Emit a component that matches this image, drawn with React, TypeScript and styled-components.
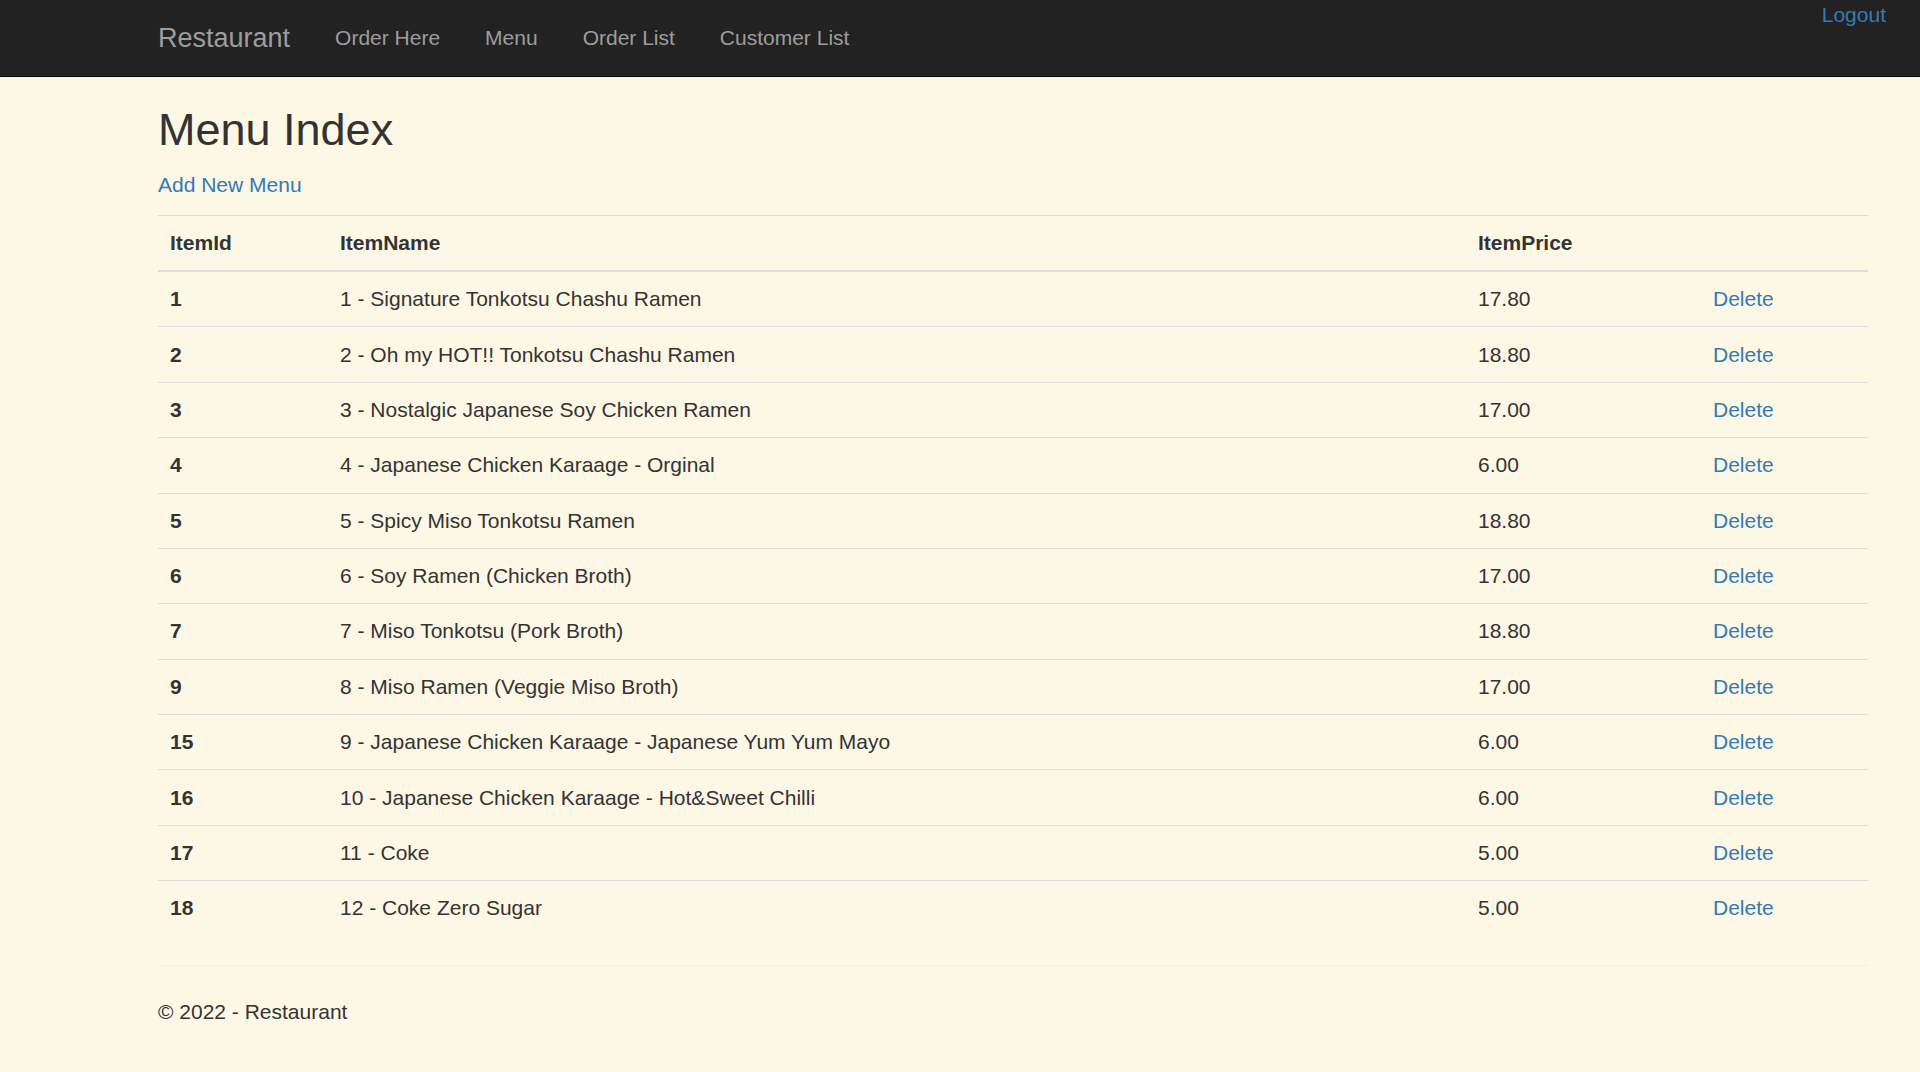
import React from "react";
import styled, { createGlobalStyle } from "styled-components";

const GlobalStyle = createGlobalStyle`
  html, body {
    margin: 0;
    padding: 0;
    background: #fdf8e5;
  }
  body {
    font-family: "Liberation Sans", Arial, Helvetica, sans-serif;
    font-size: 21px;
    line-height: 30px;
    color: #333333;
    overflow: hidden;
  }
  * { box-sizing: border-box; }
`;

const NavBar = styled.header`
  height: 77px;
  background: #222222;
  border-bottom: 1px solid #080808;
  display: flex;
  align-items: flex-start;
  padding: 0 34px 0 158px;
`;

const Brand = styled.a`
  font-size: 27px;
  line-height: 30px;
  padding: 22.5px 22.5px 22.5px 0;
  color: #9d9d9d;
  text-decoration: none;
`;

const NavList = styled.nav`
  display: flex;
`;

const NavLink = styled.a`
  font-size: 21px;
  line-height: 30px;
  padding: 22.5px;
  color: #9d9d9d;
  text-decoration: none;
`;

const Logout = styled.a`
  margin-left: auto;
  font-size: 21px;
  line-height: 30px;
  color: #337ab7;
  text-decoration: none;
`;

const Main = styled.main`
  width: 1710px;
  margin-left: 158px;
  padding-top: 28px;
`;

const Title = styled.h2`
  font-size: 45px;
  line-height: 49.5px;
  font-weight: 500;
  margin: 0 0 15px;
`;

const Para = styled.p`
  margin: 0 0 15px;
`;

const Link = styled.a`
  color: #337ab7;
  text-decoration: none;
`;

const Table = styled.table`
  width: 1710px;
  table-layout: fixed;
  border-collapse: collapse;
  margin-bottom: 29.5px;
`;

const HeadCell = styled.th`
  text-align: left;
  font-weight: 700;
  padding: 12.25px 12px;
  line-height: 30px;
  border-top: 1px solid #dddddd;
  border-bottom: 2px solid #dddddd;
`;

const Cell = styled.td<{ $bold?: boolean }>`
  padding: 12.2px 12px;
  line-height: 30px;
  border-top: 1px solid #dddddd;
  font-weight: ${(p) => (p.$bold ? 700 : 400)};
  white-space: nowrap;
`;

const Rule = styled.hr`
  border: 0;
  border-top: 1px solid #eeeeee;
  margin: 0 0 31px;
`;

const Footer = styled.footer`
  p { margin: 0 0 15px; }
`;

const rows: [string, string, string][] = [
  ["1", "1 - Signature Tonkotsu Chashu Ramen", "17.80"],
  ["2", "2 - Oh my HOT!! Tonkotsu Chashu Ramen", "18.80"],
  ["3", "3 - Nostalgic Japanese Soy Chicken Ramen", "17.00"],
  ["4", "4 - Japanese Chicken Karaage - Orginal", "6.00"],
  ["5", "5 - Spicy Miso Tonkotsu Ramen", "18.80"],
  ["6", "6 - Soy Ramen (Chicken Broth)", "17.00"],
  ["7", "7 - Miso Tonkotsu (Pork Broth)", "18.80"],
  ["9", "8 - Miso Ramen (Veggie Miso Broth)", "17.00"],
  ["15", "9 - Japanese Chicken Karaage - Japanese Yum Yum Mayo", "6.00"],
  ["16", "10 - Japanese Chicken Karaage - Hot&Sweet Chilli", "6.00"],
  ["17", "11 - Coke", "5.00"],
  ["18", "12 - Coke Zero Sugar", "5.00"],
];

export default function App() {
  return (
    <>
      <GlobalStyle />
      <NavBar>
        <Brand href="#">Restaurant</Brand>
        <NavList>
          <NavLink href="#">Order Here</NavLink>
          <NavLink href="#">Menu</NavLink>
          <NavLink href="#">Order List</NavLink>
          <NavLink href="#">Customer List</NavLink>
        </NavList>
        <Logout href="#">Logout</Logout>
      </NavBar>
      <Main>
        <Title>Menu Index</Title>
        <Para>
          <Link href="#">Add New Menu</Link>
        </Para>
        <Table>
          <colgroup>
            <col style={{ width: 170 }} />
            <col style={{ width: 1138 }} />
            <col style={{ width: 235 }} />
            <col style={{ width: 167 }} />
          </colgroup>
          <thead>
            <tr>
              <HeadCell>ItemId</HeadCell>
              <HeadCell>ItemName</HeadCell>
              <HeadCell>ItemPrice</HeadCell>
              <HeadCell></HeadCell>
            </tr>
          </thead>
          <tbody>
            {rows.map(([id, name, price]) => (
              <tr key={id}>
                <Cell $bold>{id}</Cell>
                <Cell>{name}</Cell>
                <Cell>{price}</Cell>
                <Cell>
                  <Link href="#">Delete</Link>
                </Cell>
              </tr>
            ))}
          </tbody>
        </Table>
        <Rule />
        <Footer>
          <p>© 2022 - Restaurant</p>
        </Footer>
      </Main>
    </>
  );
}
